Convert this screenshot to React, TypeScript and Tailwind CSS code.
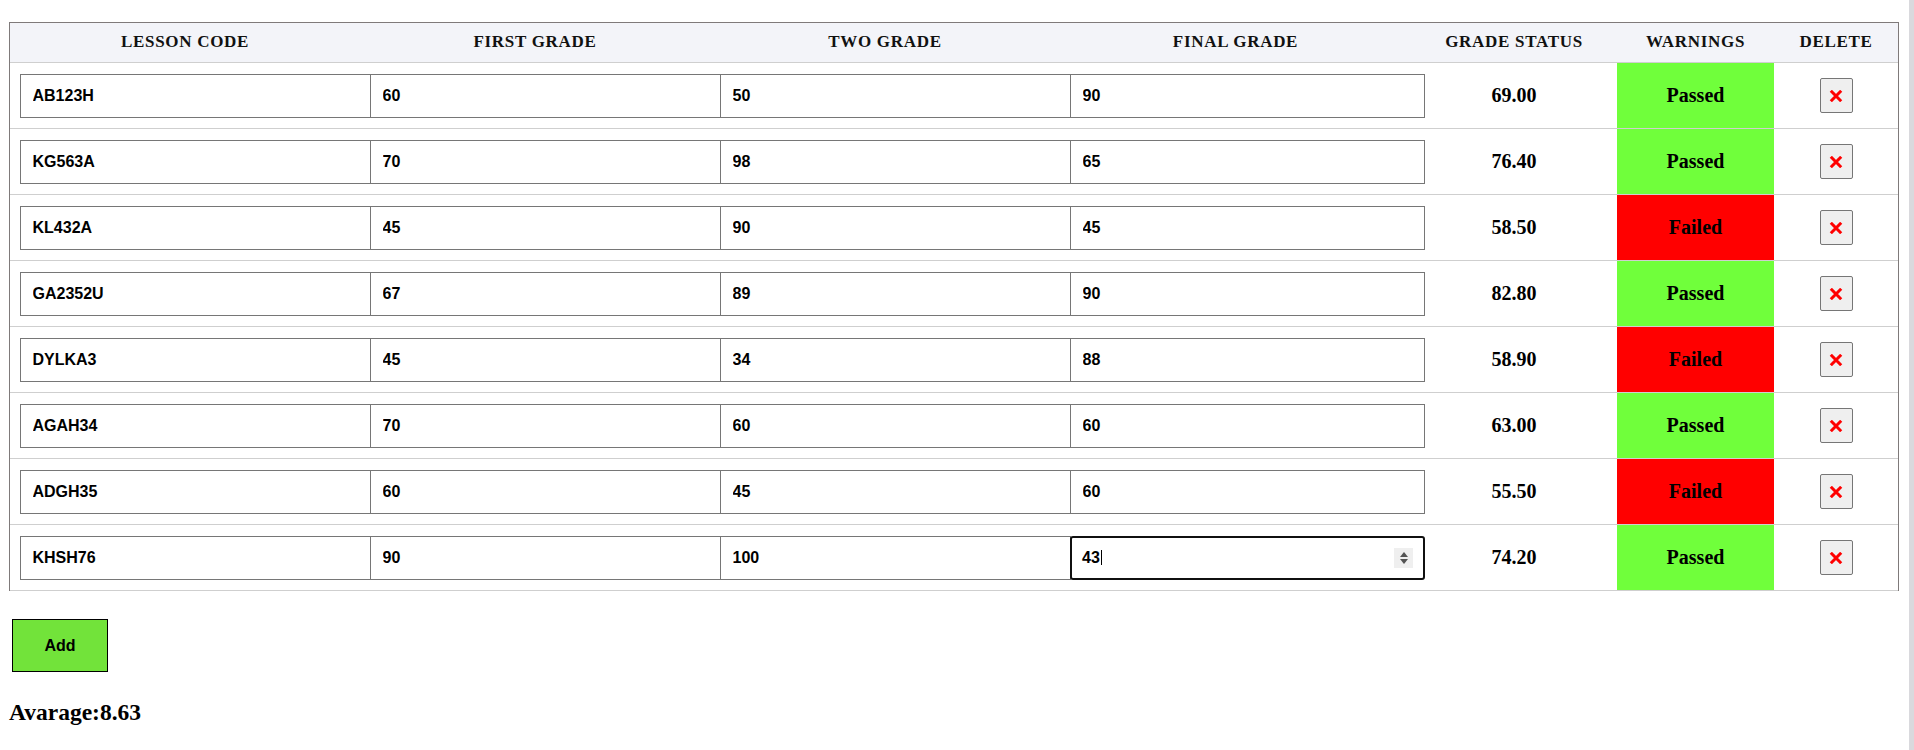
import React from 'react';

type Lesson = {
  code: string;
  first: number;
  second: number;
  final: number;
  status: string;
  passed: boolean;
};

const lessons: Lesson[] = [
  { code: 'AB123H', first: 60, second: 50, final: 90, status: '69.00', passed: true },
  { code: 'KG563A', first: 70, second: 98, final: 65, status: '76.40', passed: true },
  { code: 'KL432A', first: 45, second: 90, final: 45, status: '58.50', passed: false },
  { code: 'GA2352U', first: 67, second: 89, final: 90, status: '82.80', passed: true },
  { code: 'DYLKA3', first: 45, second: 34, final: 88, status: '58.90', passed: false },
  { code: 'AGAH34', first: 70, second: 60, final: 60, status: '63.00', passed: true },
  { code: 'ADGH35', first: 60, second: 45, final: 60, status: '55.50', passed: false },
  { code: 'KHSH76', first: 90, second: 100, final: 43, status: '74.20', passed: true },
];

const serif = "font-['Liberation_Serif',_'Times_New_Roman',_serif]";
const sans = "font-['Liberation_Sans',_Arial,_sans-serif]";
const cols = 'grid grid-cols-[350px_350px_350px_351px_206px_157px_124px]';

function GradeInput({ value, wide }: { value: string | number; wide?: boolean }) {
  return (
    <input
      readOnly
      value={value}
      className={`${wide ? 'w-[355px]' : 'w-[351px]'} h-[44px] shrink-0 border border-[#767676] bg-white pl-[11.5px] text-[16px] font-bold text-black outline-none ${sans}`}
    />
  );
}

function FocusedInput({ value }: { value: number }) {
  return (
    <div className="flex h-[44px] w-[355px] shrink-0 items-center rounded-[3px] border-2 border-[#101010] bg-white pl-[10px] pr-[10px]">
      <span className={`text-[16px] font-bold text-black ${sans}`}>{value}</span>
      <span className="ml-px h-[15px] w-px bg-black" />
      <div className="ml-auto flex h-[20px] w-[19px] flex-col items-center justify-center gap-[2px] bg-[#efefef]">
        <svg width="8" height="5" viewBox="0 0 8 5">
          <path d="M4 0 L8 5 L0 5 Z" fill="#545454" />
        </svg>
        <svg width="8" height="5" viewBox="0 0 8 5">
          <path d="M0 0 L8 0 L4 5 Z" fill="#545454" />
        </svg>
      </div>
    </div>
  );
}

function DeleteButton() {
  return (
    <button className="flex h-[35px] w-[33px] items-center justify-center rounded-[2px] border border-[#767676] bg-[#efefef]">
      <svg width="14" height="12" viewBox="0 0 14 12">
        <path d="M1.8 0.8 L12.2 11.2 M12.2 0.8 L1.8 11.2" stroke="#ff0000" strokeWidth="3" />
      </svg>
    </button>
  );
}

export default function App() {
  const headers = ['Lesson Code', 'First Grade', 'Two Grade', 'Final Grade', 'Grade Status', 'Warnings', 'Delete'];

  return (
    <div className="flex min-h-[750px] bg-white text-black">
      <div className="flex-1">
        <div className="ml-[9px] mt-[22px] w-[1890px] border border-b-0 border-[#7f7a7a]">
          <div className={`${cols} h-[40px] border-b border-[#cfcfcf] bg-[#f3f4f9]`}>
            {headers.map((h) => (
              <div
                key={h}
                className={`flex items-center justify-center pb-[2px] text-[17px] font-bold uppercase tracking-[0.7px] text-[#111] ${serif}`}
              >
                {h}
              </div>
            ))}
          </div>

          {lessons.map((l, i) => {
            const last = i === lessons.length - 1;
            return (
              <div key={l.code} className={`${cols} h-[66px] border-b border-[#cfcfcf]`}>
                <div className="flex items-center pl-[10px]">
                  <GradeInput value={l.code} />
                </div>
                <div className="flex items-center pl-[10px]">
                  <GradeInput value={l.first} />
                </div>
                <div className="flex items-center pl-[10px]">
                  <GradeInput value={l.second} />
                </div>
                <div className="flex items-center pl-[10px]">
                  {last ? <FocusedInput value={l.final} /> : <GradeInput value={l.final} wide />}
                </div>
                <div className={`flex items-center justify-center pb-[2px] text-[20px] font-bold ${serif}`}>
                  {l.status}
                </div>
                <div
                  className={`flex items-center justify-center pb-[2px] text-[20px] font-bold ${serif} ${
                    l.passed ? 'bg-[#70ff3b]' : 'bg-[#ff0000]'
                  }`}
                >
                  {l.passed ? 'Passed' : 'Failed'}
                </div>
                <div className="flex items-center justify-center">
                  <DeleteButton />
                </div>
              </div>
            );
          })}
        </div>

        <button
          className={`ml-[12px] mt-[28px] h-[53px] w-[96px] border border-black bg-[#72e33a] text-[16px] font-bold text-black ${sans}`}
        >
          Add
        </button>

        <div className={`ml-[9px] mt-[26px] text-[23.5px] font-bold leading-[28px] ${serif}`}>Avarage:8.63</div>
      </div>
      <div className="w-[5px] bg-[#d9d9dd]" />
    </div>
  );
}
